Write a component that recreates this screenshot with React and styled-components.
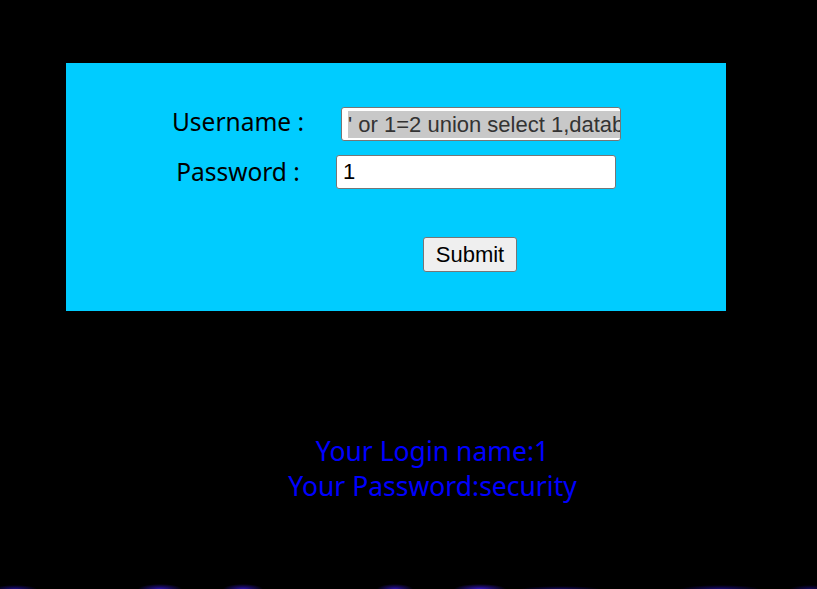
import styled, { createGlobalStyle } from 'styled-components';

const Global = createGlobalStyle`
  html, body {
    margin: 0;
    padding: 0;
    background: #000;
    height: 100%;
    overflow: hidden;
  }
  #root {
    height: 100%;
  }
`;

const Page = styled.div`
  position: relative;
  height: 589px;
  background: #000;
  padding-top: 63px;
  box-sizing: border-box;
  font-family: 'Noto Sans', 'Open Sans', sans-serif;
`;

const Panel = styled.div`
  margin-left: 66px;
  width: 660px;
  height: 248px;
  background: #00ccff;
  box-sizing: border-box;
  padding-top: 44px;
`;

const Row = styled.div`
  display: grid;
  grid-template-columns: 144px 336px;
  margin-left: 100px;
  height: 34px;
  align-items: center;
  margin-bottom: ${(p) => p.gap || 0}px;
`;

const Label = styled.label`
  text-align: center;
  font-size: 24.5px;
  color: #000;
  line-height: 1;
  transform: translateY(${(p) => p.shift || 0}px);
`;

const Field = styled.div`
  justify-self: center;
  width: 280px;
  height: 34px;
  box-sizing: border-box;
  border: 1px solid #767676;
  border-radius: 3px;
  background: #fff;
  display: flex;
  align-items: center;
  padding: 0 3px 0 6px;
  overflow: hidden;
  white-space: nowrap;
  font-family: 'Liberation Sans', Arial, sans-serif;
  font-size: 22px;
  color: #000;
  transform: translateX(${(p) => p.shift || 0}px);
`;

const Selected = styled.span`
  background: #c8c8c8;
  color: #333;
  line-height: 27px;
  padding-right: 20px;
`;

const Actions = styled.div`
  display: flex;
  justify-content: center;
  width: 94px;
  margin: 48px 0 0 357px;
`;

const Button = styled.button`
  width: 94px;
  height: 35px;
  border: 1px solid #767676;
  border-radius: 3px;
  background: #efefef;
  font-family: 'Liberation Sans', Arial, sans-serif;
  font-size: 22px;
  color: #000;
  padding: 0;
`;

const Result = styled.div`
  margin-top: 123px;
  text-align: center;
  padding-left: 48px;
  color: #0000ff;
  font-size: 26.5px;
  line-height: 35px;
`;

const Glow = styled.div`
  position: absolute;
  left: 0;
  right: 0;
  bottom: 0;
  height: 8px;
  background:
    radial-gradient(ellipse 22px 4px at 15px 100%, #1a0a80 0%, transparent 100%),
    radial-gradient(ellipse 22px 5px at 160px 100%, #2a10a8 0%, transparent 100%),
    radial-gradient(ellipse 20px 5px at 243px 100%, #2a10a8 0%, transparent 100%),
    radial-gradient(ellipse 18px 5px at 395px 100%, #2a10a8 0%, transparent 100%),
    radial-gradient(ellipse 26px 5px at 480px 100%, #3314c0 0%, transparent 100%),
    radial-gradient(ellipse 40px 3px at 560px 100%, #12085a 0%, transparent 100%),
    radial-gradient(ellipse 40px 4px at 720px 100%, #160870 0%, transparent 100%),
    radial-gradient(ellipse 20px 4px at 810px 100%, #12085a 0%, transparent 100%);
`;

export default function App() {
  return (
    <>
      <Global />
      <Page>
        <Panel>
          <Row gap={14}>
            <Label shift={-2}>Username :</Label>
            <Field shift={3}>
              <Selected>' or 1=2 union select 1,database()#</Selected>
            </Field>
          </Row>
          <Row>
            <Label>Password :</Label>
            <Field shift={-2}>1</Field>
          </Row>
          <Actions>
            <Button type="button">Submit</Button>
          </Actions>
        </Panel>
        <Result>
          <div>Your Login name:1</div>
          <div>Your Password:security</div>
        </Result>
        <Glow />
      </Page>
    </>
  );
}
